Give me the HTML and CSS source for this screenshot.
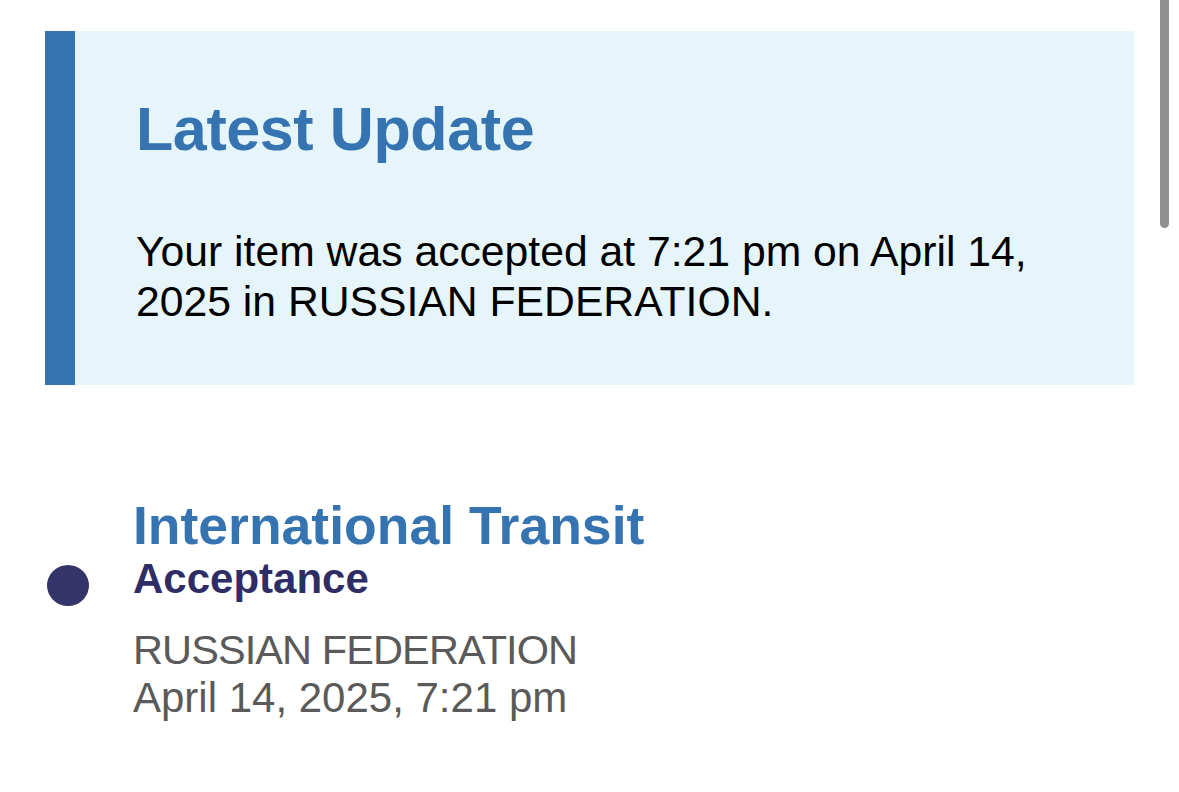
FILE: index.html
```html
<!DOCTYPE html>
<html>
<head>
<meta charset="utf-8">
<link rel="stylesheet" href="styles.css">
</head>
<body>
<div class="page">
  <section class="callout">
    <h2 class="callout-title">Latest Update</h2>
    <p class="callout-text">Your item was accepted at 7:21 pm on April 14,<br>2025 in RUSSIAN FEDERATION.</p>
  </section>
  <div class="event">
    <div class="event-marker"><span class="dot"></span></div>
    <div class="event-body">
      <div class="event-group">International Transit</div>
      <div class="event-status">Acceptance</div>
      <div class="event-meta event-location">RUSSIAN FEDERATION</div>
      <div class="event-meta event-date">April 14, 2025, 7:21 pm</div>
    </div>
  </div>
</div>
<div class="scrollbar"></div>
</body>
</html>
```
FILE: styles.css
```css
html, body {
  margin: 0;
  padding: 0;
  background: #ffffff;
}
body {
  font-family: "Liberation Sans", Arial, Helvetica, sans-serif;
  width: 1179px;
  height: 792px;
  overflow: hidden;
  position: relative;
}
.page {
  padding: 31px 45px 0 45px;
}
.callout {
  width: 998px;
  background: #e6f5f9;
  border-left: 30px solid #3573b1;
  padding: 63px 0 59px 61px;
  box-sizing: content-box;
}
.callout-title {
  margin: 0;
  font-size: 61px;
  letter-spacing: -0.4px;
  line-height: 70px;
  font-weight: 700;
  color: #3573b1;
}
.callout-text {
  margin: 62px 0 0 0;
  font-size: 42.7px;
  line-height: 50px;
  color: #000000;
}
.event {
  display: flex;
  margin-top: 112px;
  padding-left: 2px;
}
.event-marker {
  width: 86px;
  flex: none;
}
.dot {
  display: block;
  width: 42px;
  height: 41px;
  border-radius: 50%;
  background: #34336a;
  margin-top: 68px;
}
.event-group {
  font-size: 53.5px;
  line-height: 58px;
  font-weight: 700;
  color: #3573b1;
}
.event-status {
  font-size: 42px;
  line-height: 48px;
  font-weight: 700;
  color: #2f2d66;
  margin-bottom: 23px;
}
.event-meta {
  font-size: 41.5px;
  line-height: 48px;
  color: #5a5a5a;
}
.event-location {
  letter-spacing: -0.9px;
}
.event-date {
  font-size: 42px;
}
.scrollbar {
  position: absolute;
  top: 0;
  left: 1160px;
  width: 9px;
  height: 228px;
  background: #8f8f8f;
  border-radius: 0 0 5px 5px;
}
```
